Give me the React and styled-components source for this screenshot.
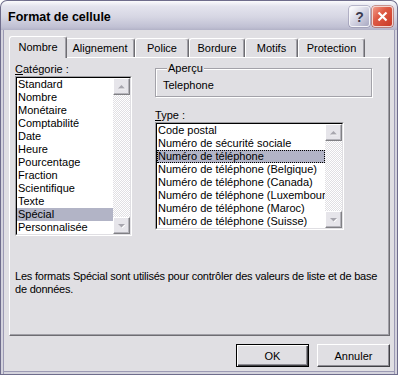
import styled, { createGlobalStyle } from 'styled-components';

const GlobalStyle = createGlobalStyle`
  html, body {
    margin: 0;
    padding: 0;
    background: #ffffff;
  }
  body {
    font-family: 'Liberation Sans', Arial, sans-serif;
    font-size: 11px;
    color: #000;
  }
`;

const Window = styled.div`
  width: 398px;
  height: 375px;
  display: flex;
  flex-direction: column;
  box-sizing: border-box;
`;

const TitleBar = styled.div`
  height: 30px;
  box-sizing: border-box;
  display: flex;
  align-items: center;
  justify-content: space-between;
  padding: 0 4px 0 7px;
  border: 1px solid #6f6d8c;
  border-bottom: 0;
  border-radius: 7px 7px 0 0;
  background: linear-gradient(#fbfbfd 0%, #e4e4ee 18%, #d6d6e3 55%, #c0c0d3 90%, #b2b2c7 100%);
`;

const Title = styled.span`
  font-weight: bold;
  font-size: 12.5px;
  color: #000;
  margin-top: 2px;
`;

const Controls = styled.div`
  display: flex;
  gap: 2px;
  margin-top: 2px;
`;

const CaptionButton = styled.div`
  width: 21px;
  height: 21px;
  box-sizing: border-box;
  border-radius: 3px;
  display: flex;
  align-items: center;
  justify-content: center;
  border: 1px solid ${(p) => (p.$close ? '#f4d6d0' : '#f4f4f8')};
  box-shadow: 0 0 0 0.5px ${(p) => (p.$close ? '#a8402f' : '#8886a4')};
  background: ${(p) =>
    p.$close
      ? 'linear-gradient(135deg, #f29a88 0%, #de5a44 40%, #c93a27 100%)'
      : 'linear-gradient(135deg, #ffffff 0%, #d8d8e6 45%, #a9a9c2 100%)'};
  color: #3b3b4e;
  font-weight: bold;
  font-size: 14px;
  line-height: 1;
`;

const Frame = styled.div`
  flex: 1;
  display: flex;
  flex-direction: column;
  padding: 6px 7px 0 8px;
  border: 1px solid #6f6d8c;
  border-top: 0;
  background: #e0dfe3;
  box-shadow: inset 2px 0 0 #d4d3dd, inset 3px 0 0 #9c9ab4, inset -2px 0 0 #d4d3dd,
    inset -3px 0 0 #9c9ab4, inset 0 -2px 0 #d4d3dd, inset 0 -3px 0 #9c9ab4;
`;

const TabStrip = styled.div`
  display: flex;
  align-items: flex-end;
  height: 21px;
  padding-left: 2px;
`;

const Tab = styled.div`
  position: relative;
  box-sizing: border-box;
  width: ${(p) => p.$width + (p.$active ? 4 : 0)}px;
  height: ${(p) => (p.$active ? 22 : 19)}px;
  margin: ${(p) => (p.$active ? '0 -2px -1px' : '0')};
  z-index: ${(p) => (p.$active ? 1 : 0)};
  display: flex;
  align-items: center;
  justify-content: center;
  padding-bottom: ${(p) => (p.$active ? 1 : 0)}px;
  background: #e0dfe3;
  border-top: 1px solid #ffffff;
  border-left: 1px solid #ffffff;
  border-right: 1px solid #6e6d72;
  border-radius: 3px 3px 0 0;
  box-shadow: inset -1px 0 0 #a09fa6;
`;

const Panel = styled.div`
  height: 279px;
  box-sizing: border-box;
  display: flex;
  flex-direction: column;
  padding: 5px 5px 0 5px;
  border: 1px solid;
  border-color: #ffffff #6e6d72 #6e6d72 #ffffff;
  box-shadow: inset -1px -1px 0 #a09fa6;
`;

const Columns = styled.div`
  display: flex;
  gap: 23px;
`;

const Column = styled.div`
  display: flex;
  flex-direction: column;
  margin-top: ${(p) => p.$shift || 0}px;
`;

const Label = styled.div`
  line-height: 13px;
  margin-top: ${(p) => p.$gap || 0}px;
  u {
    text-decoration: underline;
  }
`;

const ListFrame = styled.div`
  width: ${(p) => p.$width}px;
  height: ${(p) => p.$height}px;
  box-sizing: border-box;
  border: 1px solid;
  border-color: #a0a0a4 #ffffff #ffffff #a0a0a4;
`;

const ListInner = styled.div`
  height: 100%;
  box-sizing: border-box;
  display: flex;
  background: #ffffff;
  border: 1px solid;
  border-color: #000000 #e0dfe3 #e0dfe3 #000000;
`;

const Items = styled.div`
  flex: 1;
  min-width: 0;
`;

const Item = styled.div`
  height: 13px;
  line-height: 13px;
  padding-left: 1px;
  white-space: nowrap;
  overflow: hidden;
  background: ${(p) => (p.$selected ? '#b2b4c6' : 'transparent')};
  outline: ${(p) => (p.$focused ? '1px dotted #000' : 'none')};
  outline-offset: -1px;
`;

const ScrollBar = styled.div`
  width: 17px;
  display: flex;
  flex-direction: column;
`;

const Track = styled.div`
  flex: 1;
  background-color: #ffffff;
  background-image: conic-gradient(#e0dfe3 25%, #ffffff 0 50%, #e0dfe3 0 75%, #ffffff 0);
  background-size: 2px 2px;
`;

const ArrowButton = styled.div`
  height: 17px;
  box-sizing: border-box;
  display: flex;
  align-items: center;
  justify-content: center;
  background: #e6e5ea;
  border: 1px solid;
  border-color: #ffffff #808084 #808084 #ffffff;
  box-shadow: inset -1px -1px 0 #b4b3ba;
`;

const Arrow = ({ down }) => (
  <svg width="9" height="6" viewBox="0 0 9 6">
    <path
      d={down ? 'M1 1 H8 L4.5 4.5 Z' : 'M1 4.5 H8 L4.5 1 Z'}
      fill="#ffffff"
      transform="translate(0.8 0.8)"
    />
    <path d={down ? 'M1 1 H8 L4.5 4.5 Z' : 'M1 4.5 H8 L4.5 1 Z'} fill="#a7a6ae" />
  </svg>
);

const GroupBox = styled.fieldset`
  width: 217px;
  box-sizing: border-box;
  margin: 0;
  padding: 2px 0 4px 7px;
  border: 1px solid #a3a2a9;
  box-shadow: inset 1px 1px 0 #ffffff, 1px 1px 0 #ffffff;
`;

const Legend = styled.legend`
  padding: 0 1px;
  margin-left: 4px;
  line-height: 13px;
  background: #e0dfe3;
`;

const Preview = styled.div`
  line-height: 13px;
  margin-top: 2px;
`;

const Description = styled.p`
  margin: 34px -2px 0 0;
  line-height: 13px;
  letter-spacing: -0.22px;
`;

const ButtonRow = styled.div`
  display: flex;
  justify-content: flex-end;
  gap: 8px;
  margin-top: 8px;
`;

const Button = styled.div`
  width: 73px;
  height: 23px;
  box-sizing: border-box;
  display: flex;
  align-items: center;
  justify-content: center;
  background: #e0dfe3;
  border: 1px solid;
  border-color: ${(p) => (p.$default ? '#000' : '#fff #404044 #404044 #fff')};
  box-shadow: ${(p) =>
    p.$default
      ? 'inset 1px 1px 0 #fff, inset -1px -1px 0 #404044, inset -2px -2px 0 #8e8d94'
      : 'inset -1px -1px 0 #8e8d94'};
`;

const tabs = [
  { name: 'Nombre', width: 54 },
  { name: 'Alignement', width: 70 },
  { name: 'Police', width: 54 },
  { name: 'Bordure', width: 56 },
  { name: 'Motifs', width: 53 },
  { name: 'Protection', width: 67 },
];

const categories = [
  'Standard',
  'Nombre',
  'Monétaire',
  'Comptabilité',
  'Date',
  'Heure',
  'Pourcentage',
  'Fraction',
  'Scientifique',
  'Texte',
  'Spécial',
  'Personnalisée',
];

const types = [
  'Code postal',
  'Numéro de sécurité sociale',
  'Numéro de téléphone',
  'Numéro de téléphone (Belgique)',
  'Numéro de téléphone (Canada)',
  'Numéro de téléphone (Luxembourg)',
  'Numéro de téléphone (Maroc)',
  'Numéro de téléphone (Suisse)',
];

function ListBox({ items, selected, focused, width, height }) {
  return (
    <ListFrame $width={width} $height={height}>
      <ListInner>
        <Items>
          {items.map((item) => (
            <Item key={item} $selected={item === selected} $focused={item === focused}>
              {item}
            </Item>
          ))}
        </Items>
        <ScrollBar>
          <ArrowButton>
            <Arrow />
          </ArrowButton>
          <Track />
          <ArrowButton>
            <Arrow down />
          </ArrowButton>
        </ScrollBar>
      </ListInner>
    </ListFrame>
  );
}

export default function App() {
  return (
    <>
      <GlobalStyle />
      <Window>
        <TitleBar>
          <Title>Format de cellule</Title>
          <Controls>
            <CaptionButton>?</CaptionButton>
            <CaptionButton $close>
              <svg width="11" height="11" viewBox="0 0 11 11">
                <path d="M1.5 1.5 L9.5 9.5 M9.5 1.5 L1.5 9.5" stroke="#fff" strokeWidth="2.2" />
              </svg>
            </CaptionButton>
          </Controls>
        </TitleBar>
        <Frame>
          <TabStrip>
            {tabs.map(({ name, width }) => (
              <Tab key={name} $width={width} $active={name === 'Nombre'}>
                {name}
              </Tab>
            ))}
          </TabStrip>
          <Panel>
            <Columns>
              <Column>
                <Label>
                  <u>C</u>atégorie :
                </Label>
                <ListBox items={categories} selected="Spécial" width={117} height={160} />
              </Column>
              <Column $shift={-1}>
                <GroupBox>
                  <Legend>Aperçu</Legend>
                  <Preview>Telephone</Preview>
                </GroupBox>
                <Label $gap={12}>
                  <u>T</u>ype :
                </Label>
                <ListBox
                  items={types}
                  selected="Numéro de téléphone"
                  focused="Numéro de téléphone"
                  width={189}
                  height={108}
                />
              </Column>
            </Columns>
            <Description>
              Les formats Spécial sont utilisés pour contrôler des valeurs de liste et de base de
              données.
            </Description>
          </Panel>
          <ButtonRow>
            <Button $default>OK</Button>
            <Button>Annuler</Button>
          </ButtonRow>
        </Frame>
      </Window>
    </>
  );
}
